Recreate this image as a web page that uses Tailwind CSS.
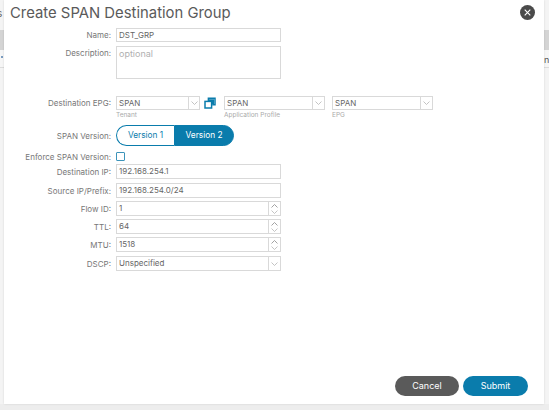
<!DOCTYPE html>
<html lang="en">
<head>
    <meta charset="UTF-8"/>
    <title>Create SPAN Destination Group</title>
    <script src="https://cdn.jsdelivr.net/npm/@tailwindcss/browser@4"></script>
</head>
<body class="bg-[#ededed] overflow-hidden font-['Inter','Liberation_Sans',sans-serif] text-[#666]">
<div class="relative w-[549px] h-[410px] overflow-hidden">
    <!-- page behind the dialog -->
    <div class="absolute left-0 top-0 w-full h-[30px] bg-[#f4f4f4]"></div>
    <div class="absolute left-0 top-[30px] w-full h-[20px] bg-[#d4d4d4]"></div>
    <div class="absolute left-0 top-[50px] w-full h-[17px] bg-[#f6f6f6]"></div>
    <div class="absolute left-0 top-[67px] w-full h-[1px] bg-[#dcdcdc]"></div>
    <div class="absolute left-0 top-[68px] w-full h-[336px] bg-[#f4f4f4]"></div>
    <span class="absolute left-[-3px] top-[7px] text-[10px] leading-[12px] text-[#666]">s</span>
    <span class="absolute left-[1px] top-[56px] w-[2px] h-[2px] bg-[#7a9cc0]"></span>
    <span class="absolute left-[544px] top-[54px] text-[9px] leading-[11px] text-[#555]">na</span>

    <!-- dialog -->
    <div class="absolute left-[4px] top-0 w-[540px] h-[404px] bg-white flex flex-col shadow-[0_0_2px_rgba(0,0,0,0.12)]">
        <h1 class="h-[28px] pl-[6px] text-[14.85px] leading-[26px] text-[#5a5a5a] font-normal">Create SPAN Destination Group</h1>

        <div class="flex items-center h-[14px]">
            <label class="w-[107px] text-right text-[8px] text-[#777]">Name:</label>
            <div class="ml-[5px] w-[165px] h-full border border-[#d9d9d9] px-[2px] text-[8px] leading-[12px] text-[#666]">DST_GRP</div>
        </div>

        <div class="flex items-start mt-[4px]">
            <label class="w-[107px] text-right text-[8px] leading-[14px] text-[#777]">Description:</label>
            <div class="ml-[5px] w-[165px] h-[33px] border border-[#d9d9d9] px-[2px] text-[9px] leading-[13px] text-[#b0b0b0]">optional</div>
        </div>

        <!-- Destination EPG -->
        <div class="flex items-start mt-[17px] h-[29px]">
            <label class="w-[107px] text-right text-[8px] leading-[14px] text-[#777]">Destination EPG:</label>
            <div class="ml-[5px] w-[84px]">
                <div class="flex h-[14px] border border-[#d9d9d9] text-[8px] leading-[12px] text-[#666]">
                    <span class="flex-1 px-[2px]">SPAN</span>
                    <span class="w-[11px] border-l border-[#d9d9d9] flex items-center justify-center">
                        <svg width="7" height="4" viewBox="0 0 7 4" fill="none" stroke="#b5b5b5" stroke-width="0.8"><path d="M0.5 0.5L3.5 3.5L6.5 0.5"/></svg>
                    </span>
                </div>
                <div class="text-[6.5px] leading-[9px] mt-[1px] text-[#aaa]">Tenant</div>
            </div>
            <svg class="ml-[4px] mt-[1px]" width="12" height="12" viewBox="0 0 12 12" fill="none" stroke="#0a7cac" stroke-width="1.5">
                <path d="M4.4 4V1.2H11V7.8H8.2"/>
                <rect x="1" y="4.4" width="6.6" height="6.6" fill="#fff"/>
                <path d="M7.6 4.4H4.4V2.2H10V7H7.6Z" fill="#0a7cac" stroke="none"/>
            </svg>
            <div class="ml-[8px] w-[101px]">
                <div class="flex h-[14px] border border-[#d9d9d9] text-[8px] leading-[12px] text-[#666]">
                    <span class="flex-1 px-[2px]">SPAN</span>
                    <span class="w-[12px] border-l border-[#d9d9d9] flex items-center justify-center">
                        <svg width="7" height="4" viewBox="0 0 7 4" fill="none" stroke="#b5b5b5" stroke-width="0.8"><path d="M0.5 0.5L3.5 3.5L6.5 0.5"/></svg>
                    </span>
                </div>
                <div class="text-[6.5px] leading-[9px] mt-[1px] text-[#aaa]">Application Profile</div>
            </div>
            <div class="ml-[7px] w-[101px]">
                <div class="flex h-[14px] border border-[#d9d9d9] text-[8px] leading-[12px] text-[#666]">
                    <span class="flex-1 px-[2px]">SPAN</span>
                    <span class="w-[12px] border-l border-[#d9d9d9] flex items-center justify-center">
                        <svg width="7" height="4" viewBox="0 0 7 4" fill="none" stroke="#b5b5b5" stroke-width="0.8"><path d="M0.5 0.5L3.5 3.5L6.5 0.5"/></svg>
                    </span>
                </div>
                <div class="text-[6.5px] leading-[9px] mt-[1px] text-[#aaa]">EPG</div>
            </div>
        </div>

        <!-- SPAN Version -->
        <div class="flex items-center h-[21px]">
            <label class="w-[107px] text-right text-[8px] text-[#777]">SPAN Version:</label>
            <div class="ml-[5px] flex w-[118px] h-full text-[8.3px] leading-[19px] text-center">
                <span class="w-[58px] border border-[#0a7cac] border-r-0 rounded-l-full text-[#0a7cac] bg-white">Version 1</span>
                <span class="w-[60px] border border-[#0a7cac] rounded-r-full text-white bg-[#0a7cac]">Version 2</span>
            </div>
        </div>

        <div class="flex items-center h-[9px] mt-[6px]">
            <label class="w-[107px] text-right text-[8px] text-[#777]">Enforce SPAN Version:</label>
            <span class="ml-[5px] w-[9px] h-[9px] border border-[#3d94ba] rounded-[1px]"></span>
        </div>

        <div class="flex items-center h-[15px] mt-[3px]">
            <label class="w-[107px] text-right text-[8px] text-[#777]">Destination IP:</label>
            <div class="ml-[5px] w-[165px] h-full border border-[#d9d9d9] px-[2px] text-[8px] leading-[13px] text-[#666]">192.168.254.1</div>
        </div>

        <div class="flex items-center h-[15px] mt-[4px]">
            <label class="w-[107px] text-right text-[8px] text-[#777]">Source IP/Prefix:</label>
            <div class="ml-[5px] w-[165px] h-full border border-[#d9d9d9] px-[2px] text-[8px] leading-[13px] text-[#666]">192.168.254.0/24</div>
        </div>

        <div class="flex items-center h-[15px] mt-[3px]">
            <label class="w-[107px] text-right text-[8px] text-[#777]">Flow ID:</label>
            <div class="ml-[5px] w-[165px] h-full flex border border-[#d9d9d9] text-[8px] leading-[13px] text-[#666]">
                <span class="flex-1 px-[2px]">1</span>
                <span class="w-[12px] border-l border-[#d9d9d9] flex flex-col items-center justify-center gap-[2px]">
                    <svg width="7" height="4" viewBox="0 0 7 4" fill="none" stroke="#8a8a8a" stroke-width="0.8"><path d="M0.5 3.5L3.5 0.5L6.5 3.5"/></svg>
                    <svg width="7" height="4" viewBox="0 0 7 4" fill="none" stroke="#b5b5b5" stroke-width="0.8"><path d="M0.5 0.5L3.5 3.5L6.5 0.5"/></svg>
                </span>
            </div>
        </div>

        <div class="flex items-center h-[15px] mt-[3px]">
            <label class="w-[107px] text-right text-[8px] text-[#777]">TTL:</label>
            <div class="ml-[5px] w-[165px] h-full flex border border-[#d9d9d9] text-[8px] leading-[13px] text-[#666]">
                <span class="flex-1 px-[2px]">64</span>
                <span class="w-[12px] border-l border-[#d9d9d9] flex flex-col items-center justify-center gap-[2px]">
                    <svg width="7" height="4" viewBox="0 0 7 4" fill="none" stroke="#8a8a8a" stroke-width="0.8"><path d="M0.5 3.5L3.5 0.5L6.5 3.5"/></svg>
                    <svg width="7" height="4" viewBox="0 0 7 4" fill="none" stroke="#b5b5b5" stroke-width="0.8"><path d="M0.5 0.5L3.5 3.5L6.5 0.5"/></svg>
                </span>
            </div>
        </div>

        <div class="flex items-center h-[15px] mt-[3px]">
            <label class="w-[107px] text-right text-[8px] text-[#777]">MTU:</label>
            <div class="ml-[5px] w-[165px] h-full flex border border-[#d9d9d9] text-[8px] leading-[13px] text-[#666]">
                <span class="flex-1 px-[2px]">1518</span>
                <span class="w-[12px] border-l border-[#d9d9d9] flex flex-col items-center justify-center gap-[2px]">
                    <svg width="7" height="4" viewBox="0 0 7 4" fill="none" stroke="#8a8a8a" stroke-width="0.8"><path d="M0.5 3.5L3.5 0.5L6.5 3.5"/></svg>
                    <svg width="7" height="4" viewBox="0 0 7 4" fill="none" stroke="#b5b5b5" stroke-width="0.8"><path d="M0.5 0.5L3.5 3.5L6.5 0.5"/></svg>
                </span>
            </div>
        </div>

        <div class="flex items-center h-[15px] mt-[4px]">
            <label class="w-[107px] text-right text-[8px] text-[#777]">DSCP:</label>
            <div class="ml-[5px] w-[165px] h-full flex border border-[#d9d9d9] text-[8px] leading-[13px] text-[#666]">
                <span class="flex-1 px-[2px]">Unspecified</span>
                <span class="w-[12px] border-l border-[#d9d9d9] flex items-center justify-center">
                    <svg width="7" height="4" viewBox="0 0 7 4" fill="none" stroke="#b5b5b5" stroke-width="0.8"><path d="M0.5 0.5L3.5 3.5L6.5 0.5"/></svg>
                </span>
            </div>
        </div>

        <!-- footer buttons -->
        <div class="mt-auto flex justify-end gap-[4px] pr-[16px] pb-[8px]">
            <button class="w-[64px] h-[20px] rounded-full bg-[#5a5a5a] text-white text-[9px]">Cancel</button>
            <button class="w-[65px] h-[20px] rounded-full bg-[#0a7cac] text-white text-[9px]">Submit</button>
        </div>

        <!-- close -->
        <button class="absolute left-[516px] top-[5px] w-[15px] h-[15px] rounded-full bg-[#4a4a4a] flex items-center justify-center">
            <svg width="7" height="7" viewBox="0 0 7 7" fill="none" stroke="#fff" stroke-width="1.1"><path d="M0.7 0.7L6.3 6.3M6.3 0.7L0.7 6.3"/></svg>
        </button>
    </div>
</div>
</body>
</html>
